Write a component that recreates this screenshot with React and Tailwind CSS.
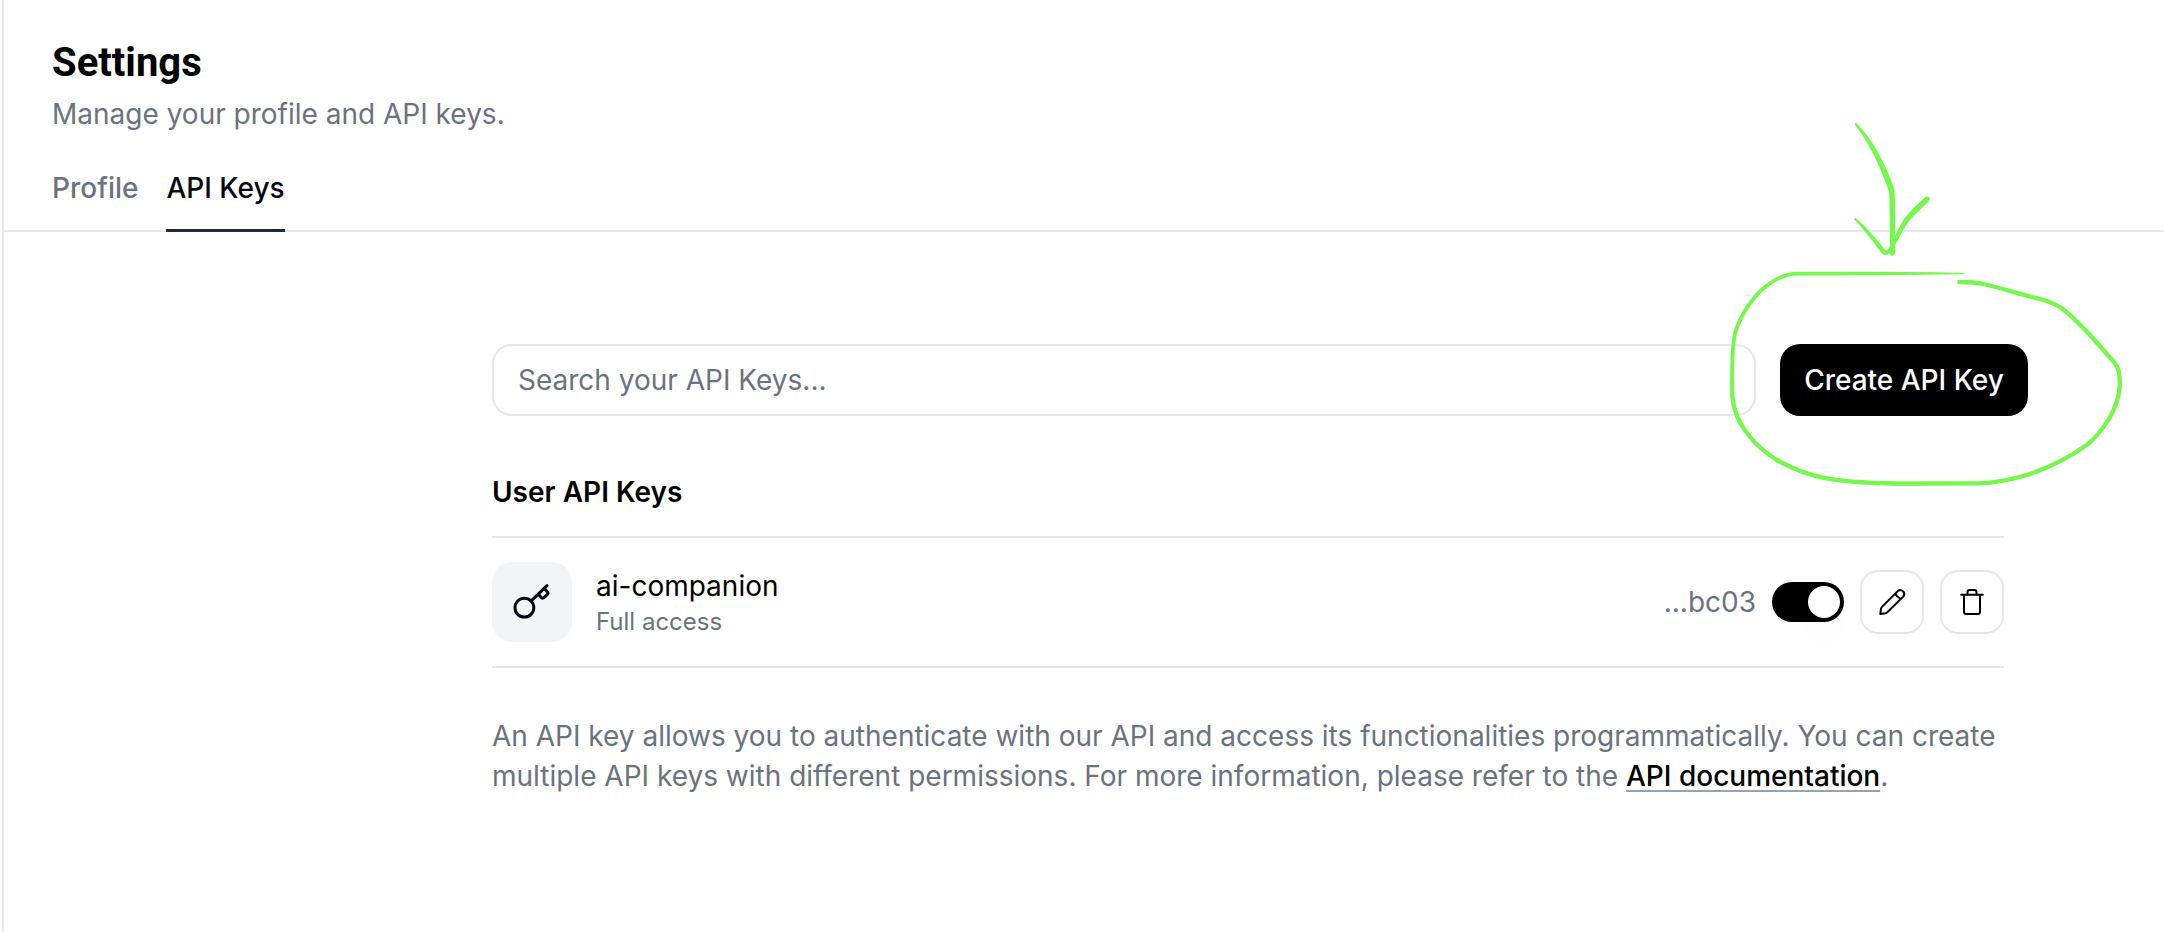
import { useState } from "react";

function KeyIcon() {
  return (
    <svg className="size-12" viewBox="0 0 48 48" fill="none" stroke="currentColor" strokeWidth="3" strokeLinecap="round" strokeLinejoin="round" aria-hidden="true">
      <circle cx="16.4" cy="29.7" r="9.4" />
      <path d="M23.2 22.9 L39 7.6 M30.2 16 L33.2 19.4 Q34.6 20.9 36.2 19.4 L39.2 16.6 Q40.6 15.2 39.3 13.8 L36.4 10.6" />
    </svg>
  );
}

function PencilIcon() {
  return (
    <svg className="size-8" viewBox="0 0 32 32" fill="none" stroke="currentColor" strokeWidth="2" strokeLinecap="round" strokeLinejoin="round" aria-hidden="true">
      <path d="M4.3 27.9 L5 22.8 Q5.2 21.7 6 20.9 L21.7 5.1 A3.9 3.9 0 0 1 27.2 10.6 L11.3 26.3 Q10.5 27.1 9.4 27.3 Z M19.2 7.6 Q20.6 10.8 24.7 12.8" />
    </svg>
  );
}

function TrashIcon() {
  return (
    <svg className="size-8" viewBox="0 0 32 32" fill="none" stroke="currentColor" strokeWidth="2" strokeLinecap="round" strokeLinejoin="round" aria-hidden="true">
      <path d="M5.2 8.7 H26.8 M8 8.7 V25.8 Q8 28 10.2 28 H21.8 Q24 28 24 25.8 V8.7 M11.5 8.7 V6.2 Q11.5 4 13.7 4 H18.3 Q20.5 4 20.5 6.2 V8.7" />
    </svg>
  );
}

function Annotation() {
  return (
    <svg className="pointer-events-none absolute -top-[224px] -left-[50px] h-[370px] w-[400px]" viewBox="1730 120 400 370" fill="none" stroke="#74f84b" strokeLinecap="round" strokeLinejoin="round" aria-hidden="true">
      <g fill="#74f84b" stroke="none">
        <path d="M1856 122.5 C1873 140 1885 163 1893.5 187 Q1895 193 1895 200 L1895 253 Q1894 256 1892 256 Q1890 255 1890 253 L1889.5 200 Q1889.5 192 1887 186 C1878 162 1869 143 1854.5 124 Z" />
        <path d="M1855.5 217.8 C1866 227 1875 237 1885 250 Q1887 251 1889 248 C1894 239 1898 228 1904 219 C1910 210.5 1918 203.5 1925.5 197 Q1929.5 195.5 1930 199.5 C1924 207 1914 214 1908 222.5 C1902 231 1897 243 1890 253 Q1885.5 257.5 1881 252.5 C1873 241.5 1864 229.5 1854 219.5 Z" />
        <path d="M1964.5 273 C1910 271.5 1850 271.8 1797 271.8 L1797 275.4 C1850 275.4 1910 275.2 1964.5 274.2 Z" />
      </g>
      <path strokeWidth="3.8" d="M1797 273.6 C1784 273.6 1768 282 1755 296.7 C1747 306.5 1739 319 1735 333.3 C1732 347 1732 365 1732 380" />
      <path strokeWidth="4.3" d="M1959.3 282 C1968 282 1976 282.3 1983.3 284 C2003 288.5 2023 295 2043.3 300 C2050 302 2056 304.5 2061.7 308.3 C2072 316 2080 325 2090 335 C2099 345 2107 354 2115 363.3 C2119 369 2120 374 2119.7 386 C2119 398 2115 409 2108.3 420 C2102 430 2095 438.5 2086.7 445 C2070 457 2050 467.5 2026.7 475 C2010 480 1994 483.3 1976.7 483.3 L1910 483.5 C1880 483.5 1850 482.5 1826.7 478.3 C1808 475 1792 468.5 1776.7 460 C1766 453 1757 446 1750 437 C1742 427 1737 418 1735 410 C1732 400 1732 395 1732 380" />
    </svg>
  );
}

export default function App() {
  const [enabled, setEnabled] = useState(true);
  return (
    <div className="ml-[2px] min-h-screen border-l-2 border-gray-200 bg-white font-['Inter',sans-serif] text-[28px] leading-10 text-black">
      <header className="border-b-2 border-gray-200 px-12 pt-10">
        <h1 className="font-['Roboto',sans-serif] text-[40px] leading-[46px] font-bold">Settings</h1>
        <p className="mt-2 text-[#6b7280]">Manage your profile and API keys.</p>
        <nav className="mt-[34px] flex gap-7 font-medium">
          <a href="#profile" className="pb-[22px] text-[#6b7280]">Profile</a>
          <a href="#api-keys" aria-current="page" className="-mb-[2px] border-b-[3px] border-gray-800 pb-5 text-gray-950">API Keys</a>
        </nav>
      </header>

      <main className="pt-[112px] pr-[136px] pl-[488px]">
        <div className="flex gap-6">
          <input type="search" aria-label="Search API keys" placeholder="Search your API Keys..." className="h-[72px] min-w-0 flex-1 rounded-[20px] border-2 border-gray-200 px-6 placeholder:text-[#6b7280] placeholder:opacity-100" />
          <div className="relative">
            <button type="button" className="h-[72px] w-[248px] rounded-[20px] bg-black font-medium text-white">Create API Key</button>
            <Annotation />
          </div>
        </div>

        <section className="mt-14 mr-6">
          <h2 className="font-semibold">User API Keys</h2>
          <div className="mt-6 flex items-center gap-4 border-y-2 border-gray-200 py-6">
            <div className="flex size-20 items-center justify-center rounded-[20px] bg-gray-100 text-gray-950"><KeyIcon /></div>
            <div className="ml-2 flex-1">
              <p>ai-companion</p>
              <p className="text-2xl text-[#6b7280]">Full access</p>
            </div>
            <span className="text-[#6b7280]">...bc03</span>
            <label className="flex h-10 w-[72px] cursor-pointer rounded-full bg-gray-300 p-1 has-checked:justify-end has-checked:bg-black">
              <input type="checkbox" role="switch" aria-label="Enable ai-companion" className="sr-only" checked={enabled} onChange={(e) => setEnabled(e.target.checked)} />
              <span className="size-8 rounded-full bg-white shadow-[0_20px_30px_-6px_rgba(0,0,0,0.05)]" />
            </label>
            <button type="button" aria-label="Edit key" className="flex size-16 items-center justify-center rounded-[18px] border-2 border-gray-200"><PencilIcon /></button>
            <button type="button" aria-label="Delete key" className="flex size-16 items-center justify-center rounded-[18px] border-2 border-gray-200"><TrashIcon /></button>
          </div>
          <p className="mt-12 text-[#6b7280]">
            An API key allows you to authenticate with our API and access its functionalities programmatically. You can create multiple API keys with different permissions. For more information, please refer to the{" "}
            <a href="#docs" className="font-medium text-black underline decoration-gray-400 decoration-2 underline-offset-4 [text-decoration-skip-ink:none]">API documentation</a>.
          </p>
        </section>
      </main>
    </div>
  );
}
